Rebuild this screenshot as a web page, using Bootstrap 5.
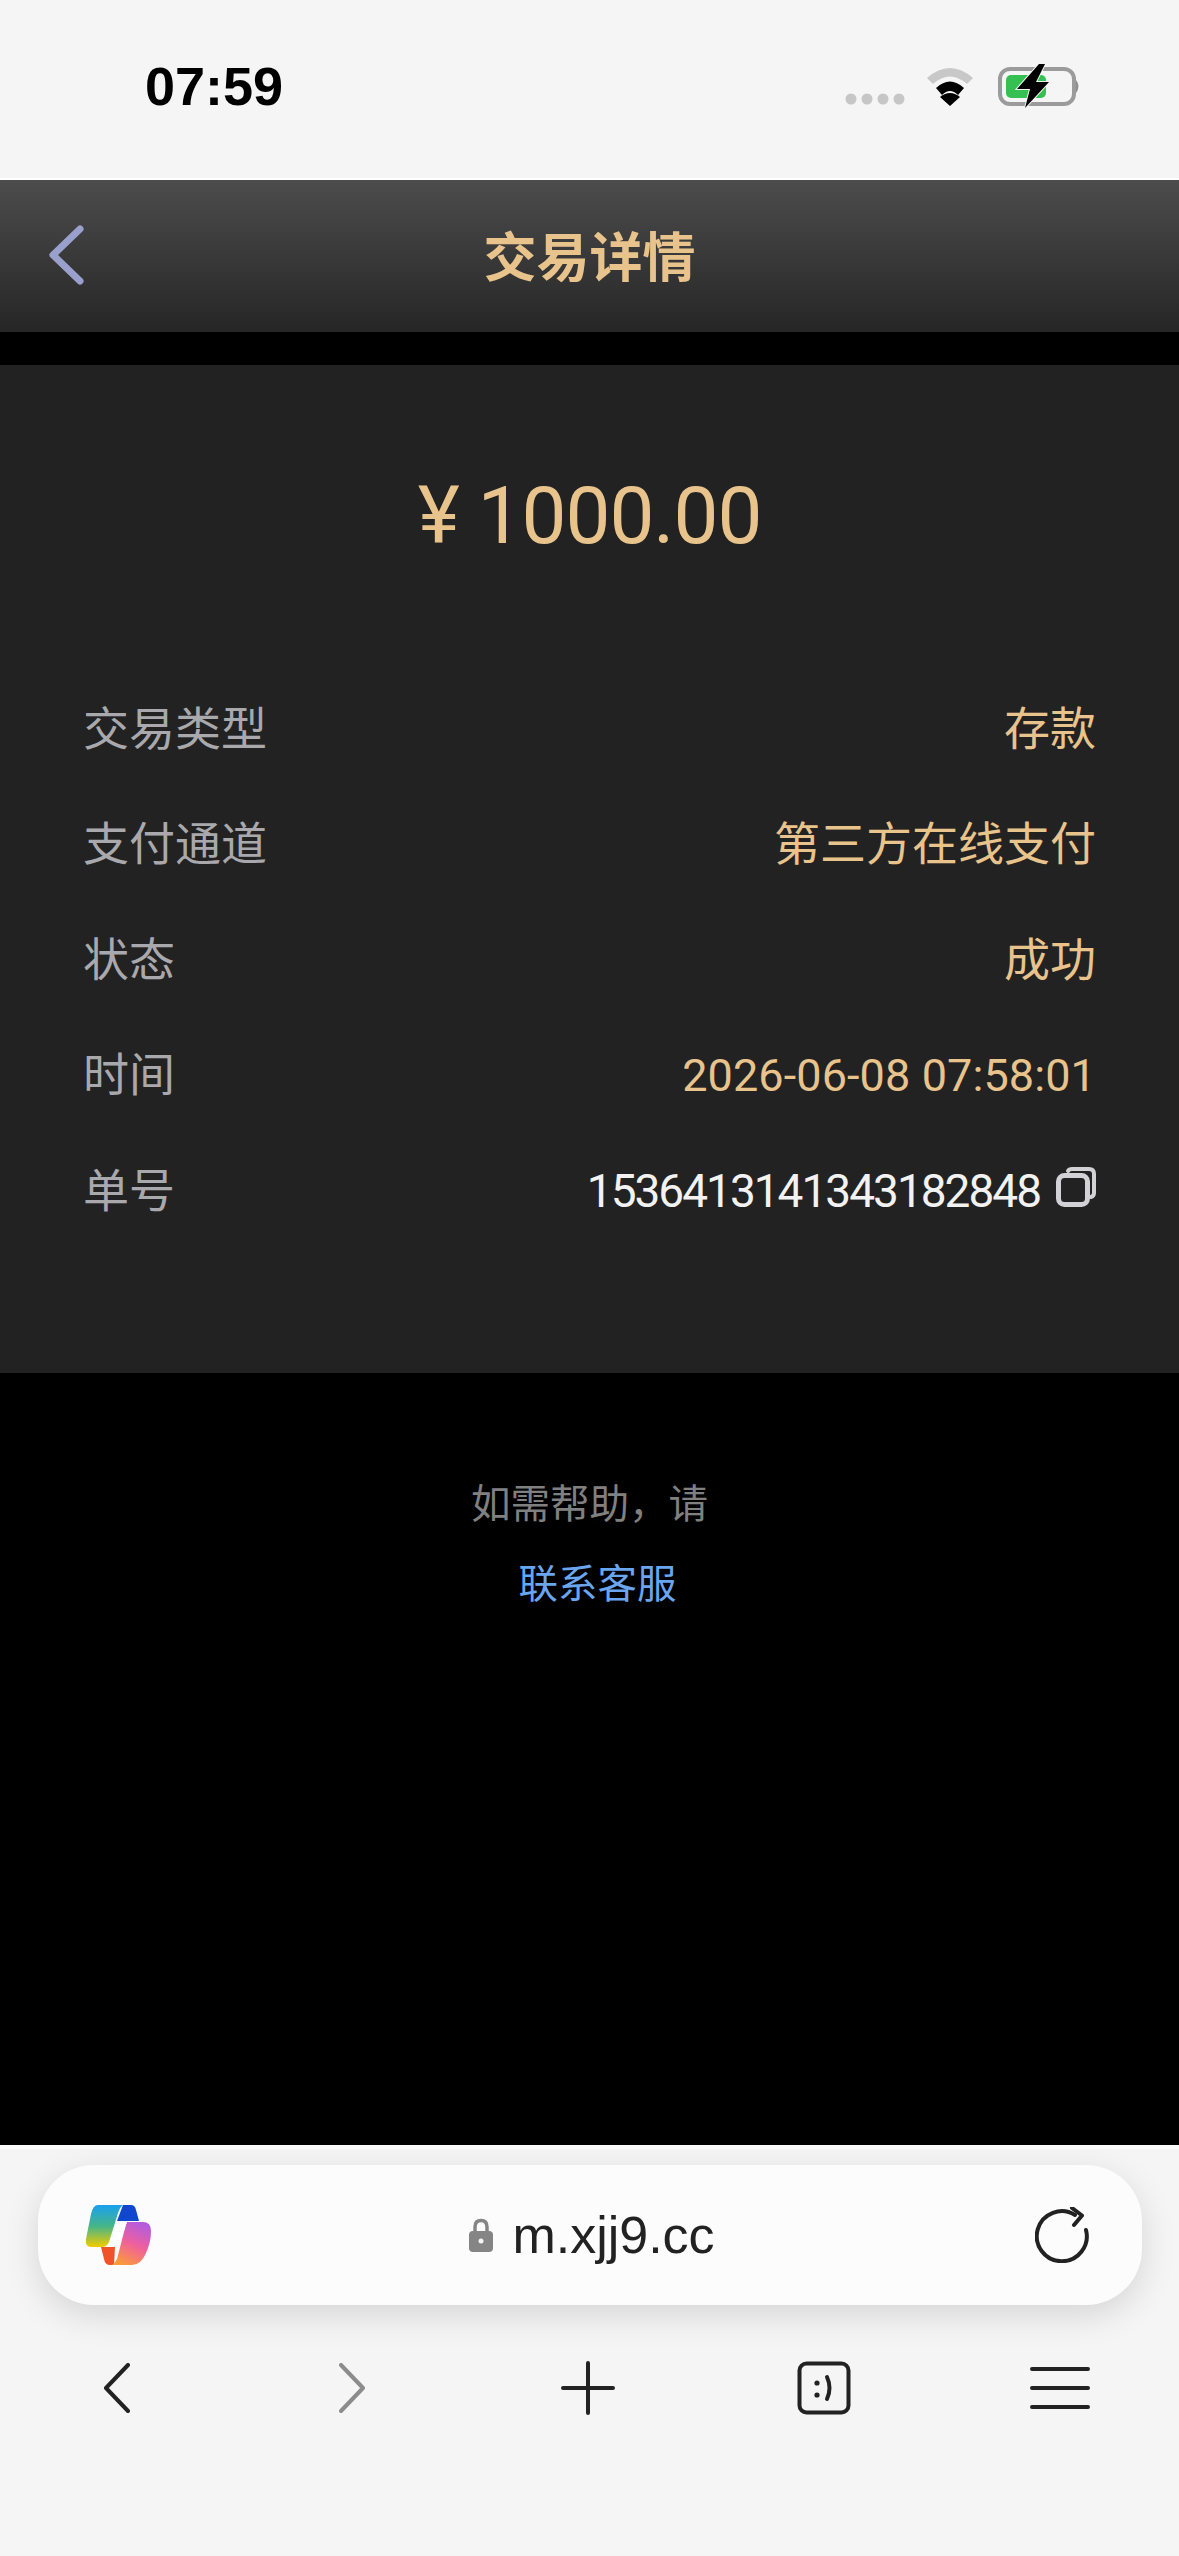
<!DOCTYPE html>
<html lang="zh-CN">
  <head>
    <meta charset="UTF-8" />
    <meta name="viewport" content="width=device-width, initial-scale=1.0" />
    <link rel="stylesheet" href="https://cdn.jsdelivr.net/npm/bootstrap@5.3.2/dist/css/bootstrap.min.css" />
    <title>交易详情</title>
    <style>
      body {
        width: 1179px;
        height: 2556px;
        overflow: hidden;
        background: #000;
        font-family: "Roboto", "Noto Sans CJK SC", sans-serif;
      }
      .status-bar {
        height: 180px;
        background: #f5f5f5;
        padding: 0 98px 0 145px;
        border-bottom: 2px solid #fff;
      }
      .status-time {
        font: 700 54px/1 "Liberation Sans", sans-serif;
        color: #000;
        margin-top: -6px;
      }
      .status-icons {
        margin-top: -7px;
      }
      .top-bar {
        height: 152px;
        background: linear-gradient(#4c4c4c, #262626);
      }
      .top-back {
        position: absolute;
        left: 47px;
        top: 45px;
      }
      .top-title {
        font-size: 53px;
        font-weight: 700;
        color: #e8c48c;
        line-height: 1;
        margin-top: 6px;
      }
      .detail-panel {
        margin-top: 33px;
        height: 1008px;
        background: #222223;
        padding: 0 83px 0 83px;
      }
      .amount-line {
        height: 302px;
        font-size: 80px;
        font-weight: 400;
        letter-spacing: -1px;
        color: #e8c48c;
      }
      .rows-wrap {
        padding-top: 4px;
      }
      .detail-row {
        height: 115.5px;
        font-size: 46px;
        font-weight: 400;
        line-height: 1;
      }
      .row-name {
        color: #a9a9ad;
      }
      .row-value {
        color: #e8c48c;
      }
      .row-time {
        font-size: 45px;
        letter-spacing: 0.1px;
      }
      .row-no {
        font-size: 46px;
        letter-spacing: -2px;
        color: #f2f2f2;
      }
      .copy-ic {
        margin-top: -8px;
      }
      .help-box {
        flex: 1;
        padding-top: 112px;
        font-size: 39.5px;
        font-weight: 400;
        line-height: 1;
      }
      .help-text {
        color: #808080;
      }
      .help-link {
        color: #6aa5f0;
        margin-top: 40px;
        padding-left: 16px;
      }
      .browser-bar {
        height: 411px;
        background: #f5f5f5;
        border-top: 4px solid #fbfbfb;
        padding: 16px 37px 0 38px;
      }
      .url-box {
        height: 140px;
        background: #fcfcfc;
        border-radius: 56px;
        box-shadow: 0 10px 34px rgba(0, 0, 0, 0.13);
        padding: 0 53px 0 47px;
      }
      .url-text {
        font: 400 52px/1 "Liberation Sans", sans-serif;
        color: #222;
        gap: 19px;
        margin-left: -2px;
      }
      .tool-row {
        height: 54px;
        margin: 56px 0 0 -40px;
      }
      .tool-cell {
        width: 236px;
      }
    </style>
  </head>

  <body class="d-flex flex-column">
    <div class="status-bar d-flex justify-content-between align-items-center flex-shrink-0">
      <div class="status-time">07:59</div>
      <svg class="status-icons" width="236" height="44" viewBox="0 0 236 44">
        <g fill="#c6c6c6">
          <circle cx="6" cy="35" r="5.5" />
          <circle cx="22" cy="35" r="5.5" />
          <circle cx="38" cy="35" r="5.5" />
          <circle cx="54" cy="35" r="5.5" />
        </g>
        <path d="M82 14 Q105 -6 128 14 L122 20 Q105 5 88 20 Z" fill="#c8c8c8" />
        <path d="M91 24 Q105 11 119 24 L113 31 Q105 23 97 31 Z" fill="#000" />
        <path d="M105 42 L95 33 Q105 25 115 33 Z" fill="#000" />
        <rect x="155" y="5" width="74" height="35" rx="10" fill="none" stroke="#9b9b9b" stroke-width="4" />
        <rect x="161" y="11" width="40" height="23" rx="5" fill="#34c152" />
        <path d="M231 16 Q236 22 231 29 Z" fill="#8e8e8e" />
        <path d="M194 0 L172 25 H185 L180 44 L204 18 H191 L200 0 Z" fill="#000" stroke="#f5f5f5" stroke-width="2" paint-order="stroke" />
      </svg>
    </div>

    <div class="top-bar position-relative d-flex justify-content-center align-items-center flex-shrink-0">
      <svg class="top-back" width="38" height="60" viewBox="0 0 38 60">
        <path d="M33 4 L6 30 L33 56" fill="none" stroke="#9aa0cc" stroke-width="7" stroke-linecap="round" stroke-linejoin="round" />
      </svg>
      <div class="top-title">交易详情</div>
    </div>

    <div class="detail-panel flex-shrink-0">
      <div class="amount-line d-flex justify-content-center align-items-center">¥ 1000.00</div>
      <div class="rows-wrap">
        <div class="detail-row d-flex justify-content-between align-items-center">
          <span class="row-name">交易类型</span>
          <span class="row-value">存款</span>
        </div>
        <div class="detail-row d-flex justify-content-between align-items-center">
          <span class="row-name">支付通道</span>
          <span class="row-value">第三方在线支付</span>
        </div>
        <div class="detail-row d-flex justify-content-between align-items-center">
          <span class="row-name">状态</span>
          <span class="row-value">成功</span>
        </div>
        <div class="detail-row d-flex justify-content-between align-items-center">
          <span class="row-name">时间</span>
          <span class="row-value row-time">2026-06-08 07:58:01</span>
        </div>
        <div class="detail-row d-flex justify-content-between align-items-center">
          <span class="row-name">单号</span>
          <span class="d-flex align-items-center gap-3">
            <span class="row-no">1536413141343182848</span>
            <svg class="copy-ic" width="40" height="40" viewBox="0 0 40 40">
              <path d="M12 4 Q13 2 16 2 H33 Q38 2 38 7 V26 Q38 29 35 30" fill="none" stroke="#d2d2d6" stroke-width="4" stroke-linecap="round" />
              <rect x="2.5" y="8.5" width="29" height="29" rx="6" fill="#222223" stroke="#d2d2d6" stroke-width="5" />
            </svg>
          </span>
        </div>
      </div>
    </div>

    <div class="help-box text-center">
      <div class="help-text">如需帮助，请</div>
      <div class="help-link">联系客服</div>
    </div>

    <div class="browser-bar flex-shrink-0">
      <div class="url-box d-flex justify-content-between align-items-center">
        <svg width="66" height="62" viewBox="0 0 66 62">
          <defs>
            <linearGradient id="copilotLeft" x1="0" y1="0" x2="0" y2="1">
              <stop offset="0" stop-color="#1aa0ee" />
              <stop offset="0.5" stop-color="#45b58a" />
              <stop offset="1" stop-color="#f2cc00" />
            </linearGradient>
            <linearGradient id="copilotRight" x1="0.7" y1="0" x2="0.3" y2="1">
              <stop offset="0" stop-color="#b25ce0" />
              <stop offset="0.5" stop-color="#f0609c" />
              <stop offset="1" stop-color="#fb9a3c" />
            </linearGradient>
          </defs>
          <path d="M38 1 H46 Q50 1 51 6 L54 17 H32 Z" fill="#1147cf" />
          <path d="M16 43 H30 L29 61 H25 Q20 61 19 55 Z" fill="#f0532a" />
          <path d="M13 1 H38 Q35 3 33 9 L24 38 Q22 43 17 43 H6 Q0 43 1 35 L6 10 Q8 1 13 1 Z" fill="url(#copilotLeft)" />
          <path d="M42 18 H58 Q66 18 66 27 Q66 38 61 49 Q56 61 47 61 H27 Q30 59 32 55 L40 24 Q41 20 42 18 Z" fill="url(#copilotRight)" />
          <path d="M35 18 H42 Q41 20 40 24 L33 43 H24 Q26 41 27 37 L32 22 Q33 19 35 18 Z" fill="#fff" />
        </svg>
        <div class="url-text d-flex align-items-center">
          <svg width="24" height="34" viewBox="0 0 24 34">
            <path d="M6 14 V9 Q6 2.5 12 2.5 Q18 2.5 18 9 V14" fill="none" stroke="#858585" stroke-width="3.5" />
            <rect x="0" y="13" width="24" height="21" rx="4" fill="#858585" />
            <circle cx="12" cy="23" r="2.5" fill="#f5f5f5" />
          </svg>
          <span>m.xjj9.cc</span>
        </div>
        <svg width="54" height="56" viewBox="0 0 54 56">
          <path d="M40 8 A25 25 0 1 0 51 23" fill="none" stroke="#222" stroke-width="4" stroke-linecap="round" />
          <path d="M37 1 L47 8.5 L39 18" fill="none" stroke="#222" stroke-width="4" stroke-linecap="round" stroke-linejoin="round" />
        </svg>
      </div>

      <div class="tool-row d-flex align-items-center">
        <div class="tool-cell d-flex justify-content-center flex-shrink-0">
          <svg width="27" height="50" viewBox="0 0 27 50">
            <path d="M25 2 L3 25 L25 48" fill="none" stroke="#222" stroke-width="4" stroke-linecap="round" stroke-linejoin="round" />
          </svg>
        </div>
        <div class="tool-cell d-flex justify-content-center flex-shrink-0">
          <svg width="27" height="50" viewBox="0 0 27 50">
            <path d="M2 2 L24 25 L2 48" fill="none" stroke="#8c8c8c" stroke-width="4" stroke-linecap="round" stroke-linejoin="round" />
          </svg>
        </div>
        <div class="tool-cell d-flex justify-content-center flex-shrink-0">
          <svg width="54" height="54" viewBox="0 0 54 54">
            <path d="M27 2 V52 M2 27 H52" fill="none" stroke="#222" stroke-width="4" stroke-linecap="round" />
          </svg>
        </div>
        <div class="tool-cell d-flex justify-content-center flex-shrink-0">
          <svg width="54" height="54" viewBox="0 0 54 54">
            <rect x="2.5" y="2.5" width="49" height="49" rx="7" fill="none" stroke="#222" stroke-width="4" />
            <circle cx="20" cy="22" r="2.6" fill="#222" />
            <circle cx="20" cy="34" r="2.6" fill="#222" />
            <path d="M30 16 Q35 27 30 38" fill="none" stroke="#222" stroke-width="4" stroke-linecap="round" />
          </svg>
        </div>
        <div class="tool-cell d-flex justify-content-center flex-shrink-0">
          <svg width="60" height="44" viewBox="0 0 60 44">
            <path d="M2 3 H58 M2 22 H58 M2 41 H58" fill="none" stroke="#222" stroke-width="4" stroke-linecap="round" />
          </svg>
        </div>
      </div>
    </div>
  </body>
</html>
